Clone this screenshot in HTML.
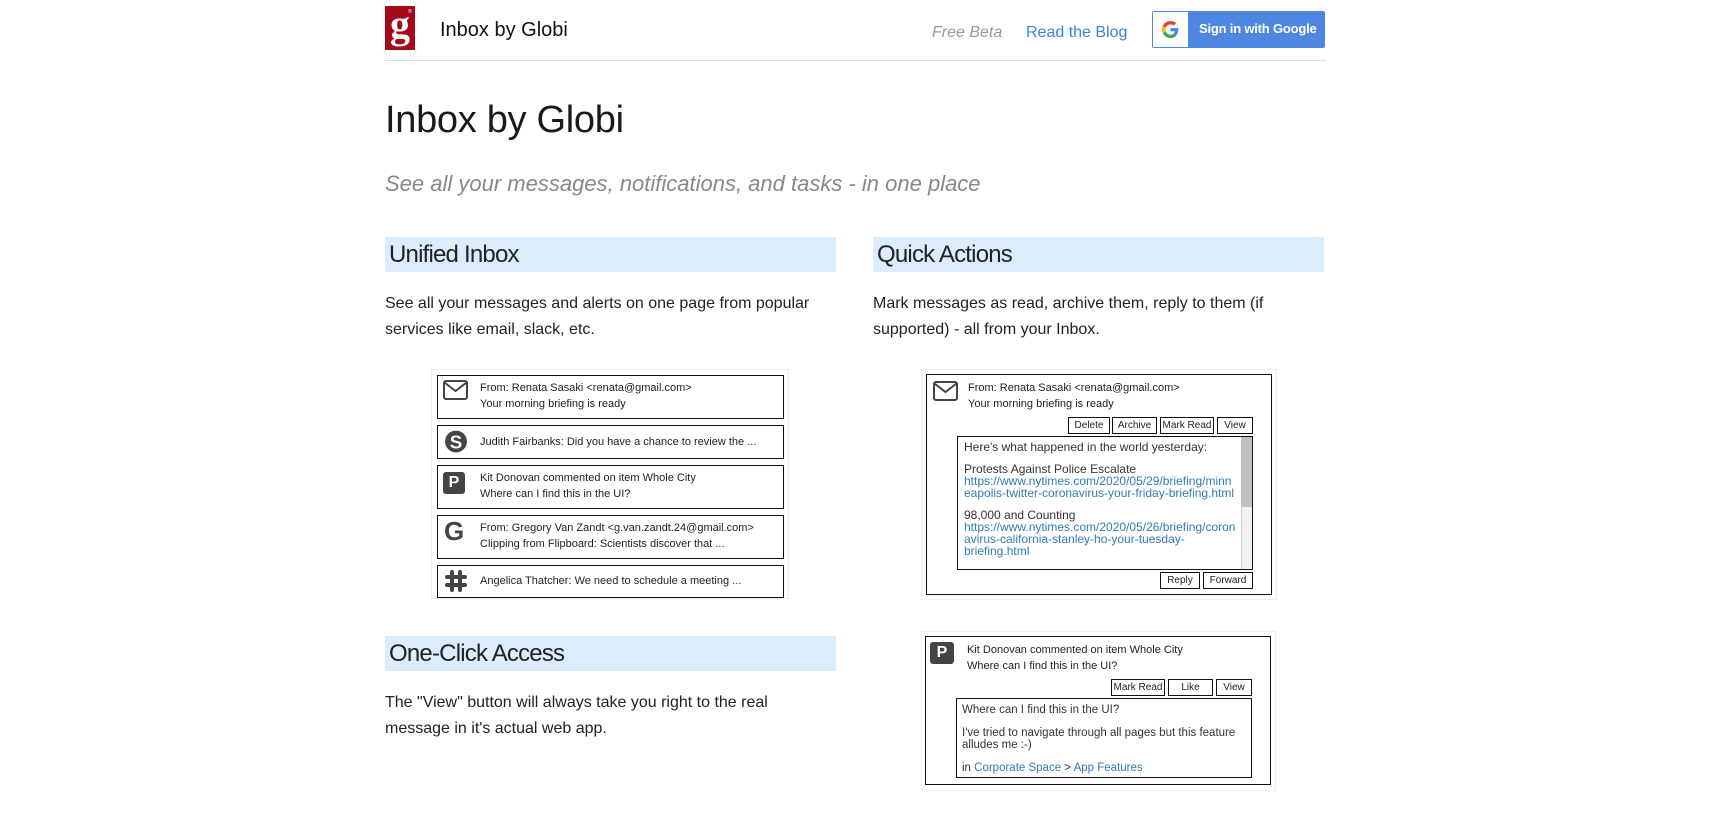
<!DOCTYPE html>
<html><head><meta charset="utf-8"><style>
*{box-sizing:border-box;margin:0;padding:0}
body{width:1716px;height:813px;background:#fff;font-family:"Liberation Sans",Arial,sans-serif;color:#222;position:relative;overflow:hidden}
.a{position:absolute}
.hdr{background:#dbecfc;height:35px;width:451px;font-size:24px;letter-spacing:-0.8px;line-height:35px;padding-left:4px;color:#222}
.p{font-size:16px;line-height:26px;color:#222;width:451px}
.fr{border:1px solid #eee}
.bx{border:1px solid #111}
.sm{font-size:11px;line-height:16px;color:#222}
.btn{position:absolute;border:1px solid #111;font-size:10px;line-height:15px;text-align:center;color:#222;background:#fff}
a{color:#337ab7;text-decoration:none}
.ico{position:absolute}
.gap{display:block;height:10px}
</style></head><body>

<!-- header -->
<div class="a" style="left:385px;top:6px;width:30px;height:44px;background:#a6091a"></div>
<div class="a" style="left:385px;top:2px;width:30px;height:48px;color:#fff;font-family:'Liberation Serif',serif;font-weight:bold;font-size:40px;line-height:46px;text-align:center">g</div>
<div class="a" style="left:408px;top:9px;color:#fff;font-size:5px">®</div>
<div class="a" style="left:440px;top:19px;font-size:20px;color:#111">Inbox by Globi</div>
<div class="a" style="left:932px;top:24px;font-size:16px;color:#999;font-style:italic">Free Beta</div>
<div class="a" style="left:1026px;top:24px;font-size:16px;color:#3b82e0">Read the Blog</div>
<div class="a" style="left:1152px;top:11px;width:173px;height:37px;background:#4f86e0;border:1px solid #4f86e0;border-radius:2px"></div>
<div class="a" style="left:1153px;top:12px;width:35px;height:35px;background:#fff"></div>
<svg class="a" style="left:1162px;top:21px" width="17" height="17" viewBox="0 0 48 48"><path fill="#EA4335" d="M24 9.5c3.5 0 6.7 1.2 9.2 3.6l6.9-6.9C35.9 2.4 30.5 0 24 0 14.6 0 6.6 5.4 2.6 13.3l8 6.2C12.5 13.7 17.8 9.5 24 9.5z"/><path fill="#4285F4" d="M46.1 24.5c0-1.6-.1-3.1-.4-4.5H24v9h12.4c-.5 2.9-2.2 5.3-4.6 7l7.5 5.8c4.4-4 6.8-10 6.8-17.3z"/><path fill="#FBBC05" d="M10.5 28.6c-.5-1.4-.8-3-.8-4.6s.3-3.2.8-4.6l-8-6.2C.9 16.5 0 20.1 0 24s.9 7.5 2.6 10.8l7.9-6.2z"/><path fill="#34A853" d="M24 48c6.5 0 11.9-2.1 15.9-5.8l-7.5-5.8c-2.1 1.4-4.8 2.3-8.4 2.3-6.2 0-11.5-4.2-13.4-9.9l-8 6.2C6.6 42.6 14.6 48 24 48z"/></svg>
<div class="a" style="left:1199px;top:21px;font-size:13px;font-weight:bold;color:#fff;letter-spacing:-0.2px">Sign in with Google</div>
<div class="a" style="left:385px;top:60px;width:941px;height:1px;background:#ddd"></div>

<div class="a" style="left:385px;top:99px;font-size:38px;color:#1a1a1a;letter-spacing:-0.3px">Inbox by Globi</div>
<div class="a" style="left:385px;top:171px;font-size:22px;color:#888;font-style:italic">See all your messages, notifications, and tasks - in one place</div>

<div class="a hdr" style="left:385px;top:237px">Unified Inbox</div>
<div class="a p" style="left:385px;top:291px">See all your messages and alerts on one page from popular services like email, slack, etc.</div>
<div class="a hdr" style="left:873px;top:237px">Quick Actions</div>
<div class="a p" style="left:873px;top:291px">Mark messages as read, archive them, reply to them (if supported) - all from your Inbox.</div>
<div class="a hdr" style="left:385px;top:636px">One-Click Access</div>
<div class="a p" style="left:385px;top:690px">The "View" button will always take you right to the real message in it's actual web app.</div>

<!-- left image -->
<div class="a fr" style="left:431px;top:369px;width:358px;height:230px"></div>
<div class="a bx" style="left:437px;top:375px;width:347px;height:44px"></div>
<svg class="ico" style="left:443px;top:380px" width="25" height="20" viewBox="0 0 25 20"><rect x="1" y="1" width="23" height="18" rx="2" fill="none" stroke="#444" stroke-width="2"/><path d="M1.5 2.5 12.5 11 23.5 2.5" fill="none" stroke="#444" stroke-width="2"/></svg>
<div class="a sm" style="left:480px;top:380px">From: Renata Sasaki &lt;renata@gmail.com&gt;<br>Your morning briefing is ready</div>
<div class="a bx" style="left:437px;top:425px;width:347px;height:34px"></div>
<svg class="ico" style="left:444px;top:429px" width="24" height="25" viewBox="0 0 22 24"><circle cx="11" cy="12" r="10.5" fill="#444"/><text x="11" y="18.5" font-family="Liberation Sans" font-weight="bold" font-size="18" fill="#fff" text-anchor="middle">S</text></svg>
<div class="a sm" style="left:480px;top:434px">Judith Fairbanks: Did you have a chance to review the ...</div>
<div class="a bx" style="left:437px;top:465px;width:347px;height:44px"></div>
<div class="a" style="left:443px;top:472px;width:22px;height:22px;background:#444;border-radius:3px;color:#fff;font-weight:bold;font-size:16px;line-height:22px;text-align:center">P</div>
<div class="a sm" style="left:480px;top:470px">Kit Donovan commented on item Whole City<br>Where can I find this in the UI?</div>
<div class="a bx" style="left:437px;top:515px;width:347px;height:44px"></div>
<div class="a" style="left:444px;top:516px;font-size:26px;font-weight:bold;color:#444">G</div>
<div class="a sm" style="left:480px;top:520px">From: Gregory Van Zandt &lt;g.van.zandt.24@gmail.com&gt;<br>Clipping from Flipboard: Scientists discover that ...</div>
<div class="a bx" style="left:437px;top:565px;width:347px;height:33px"></div>
<svg class="ico" style="left:444px;top:569px" width="24" height="24" viewBox="0 0 24 24"><g stroke="#444" stroke-width="4" stroke-linecap="round"><path d="M8 3 8 21M16 3 16 21M3 8 21 8M3 16 21 16"/></g></svg>
<div class="a sm" style="left:480px;top:573px">Angelica Thatcher: We need to schedule a meeting ...</div>

<!-- right image 1 -->
<div class="a fr" style="left:921px;top:369px;width:356px;height:231px"></div>
<div class="a bx" style="left:926px;top:374px;width:346px;height:221px"></div>
<svg class="ico" style="left:933px;top:381px" width="25" height="20" viewBox="0 0 25 20"><rect x="1" y="1" width="23" height="18" rx="2" fill="none" stroke="#444" stroke-width="2"/><path d="M1.5 2.5 12.5 11 23.5 2.5" fill="none" stroke="#444" stroke-width="2"/></svg>
<div class="a sm" style="left:968px;top:380px">From: Renata Sasaki &lt;renata@gmail.com&gt;<br>Your morning briefing is ready</div>
<div class="btn" style="left:1068px;top:417px;width:42px;height:17px">Delete</div>
<div class="btn" style="left:1112px;top:417px;width:45px;height:17px">Archive</div>
<div class="btn" style="left:1160px;top:417px;width:54px;height:17px">Mark Read</div>
<div class="btn" style="left:1217px;top:417px;width:36px;height:17px">View</div>
<div class="a bx" style="left:957px;top:436px;width:296px;height:134px;overflow:hidden">
<div class="a" style="right:0;top:0;width:11px;height:132px;background:#f1f1f1;border-left:1px solid #ccc"></div>
<div class="a" style="right:0;top:0;width:11px;height:70px;background:#c1c1c1"></div>
<div class="a" style="left:6px;top:4px;width:280px;font-size:12px;line-height:12px;color:#333;white-space:nowrap">Here's what happened in the world yesterday:<span class="gap"></span>Protests Against Police Escalate<br><a>https://www.nytimes.com/2020/05/29/briefing/minn<br>eapolis-twitter-coronavirus-your-friday-briefing.html</a><span class="gap"></span>98,000 and Counting<br><a>https://www.nytimes.com/2020/05/26/briefing/coron<br>avirus-california-stanley-ho-your-tuesday-<br>briefing.html</a></div>
</div>
<div class="btn" style="left:1160px;top:572px;width:40px;height:17px">Reply</div>
<div class="btn" style="left:1203px;top:572px;width:50px;height:17px">Forward</div>

<!-- right image 2 -->
<div class="a fr" style="left:921px;top:631px;width:355px;height:160px"></div>
<div class="a bx" style="left:925px;top:636px;width:346px;height:149px"></div>
<div class="a" style="left:930px;top:642px;width:24px;height:22px;background:#444;border-radius:3px;color:#fff;font-weight:bold;font-size:16px;line-height:22px;text-align:center">P</div>
<div class="a sm" style="left:967px;top:642px">Kit Donovan commented on item Whole City<br>Where can I find this in the UI?</div>
<div class="btn" style="left:1111px;top:679px;width:54px;height:17px">Mark Read</div>
<div class="btn" style="left:1168px;top:679px;width:45px;height:17px">Like</div>
<div class="btn" style="left:1216px;top:679px;width:36px;height:17px">View</div>
<div class="a bx" style="left:956px;top:698px;width:296px;height:80px"></div>
<div class="a" style="left:962px;top:704px;width:288px;font-size:11.5px;line-height:12px;color:#333">Where can I find this in the UI?<span class="gap" style="height:11px"></span>I've tried to navigate through all pages but this feature<br>alludes me :-)<span class="gap" style="height:11px"></span>in <a>Corporate Space</a> &gt; <a>App Features</a></div>
</body></html>
